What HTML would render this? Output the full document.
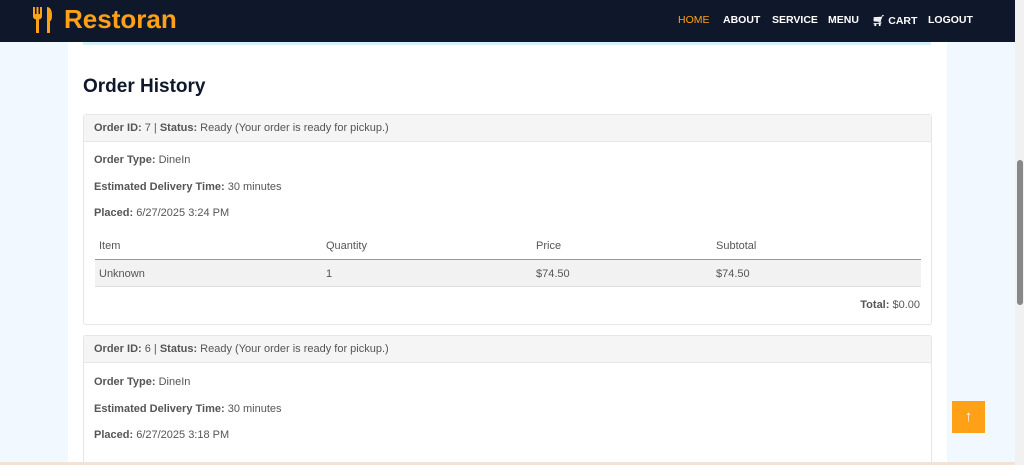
<!DOCTYPE html>
<html style="width:1024px;height:465px;overflow:hidden"><head><style>
*{box-sizing:border-box;margin:0;padding:0}
body{width:1024px;height:465px;overflow:hidden;background:#f1f8ff;font-family:"Liberation Sans",Arial,sans-serif;position:relative;color:#555;font-size:11px}
.nav{position:absolute;left:0;top:0;width:1015px;height:42px;background:#0f172b}
.logo{position:absolute;left:32px;top:4px;color:#fea116;font-weight:bold;font-size:26px;display:flex;align-items:center}
.menu{position:absolute;top:14px;left:678px;font-size:10.5px;font-weight:bold;color:#fff}
.menu span{position:absolute;white-space:nowrap}
.scroll{position:absolute;left:1015px;top:0;width:9px;height:465px;background:#f1f1f1}
.thumb{position:absolute;left:1017px;top:160px;width:6px;height:145px;background:#888;border-radius:3px}
.wrap{position:absolute;left:68px;top:42px;width:879px;height:423px;background:#fff}
.line{position:absolute;left:83px;top:42px;width:848px;height:3px;background:#d5f1fa}
h1{position:absolute;left:83px;top:76px;font-size:19px;color:#0f172b;font-weight:bold}
.card{position:absolute;left:83px;width:849px;border:1px solid #e6e6e6;border-radius:3px;background:#fff}
.hd{height:27px;background:#f5f5f5;border-bottom:1px solid #e6e6e6;padding:6px 10px;line-height:14px}
b{color:#555}
.p{position:absolute;left:10px}
.tbl{position:absolute;left:11px;width:826px}
.th{height:29px;border-bottom:1px solid #999;position:relative}
.tr{height:27px;background:#f2f2f2;border-bottom:1px solid #ddd;position:relative}
.c{position:absolute;top:8px}
.up{position:absolute;left:952px;top:401px;width:33px;height:32px;background:#fea116;color:#fff;text-align:center;line-height:32px;font-size:15px}
.bot{position:absolute;left:0;top:462px;width:1015px;height:3px;background:#f3e2d6}
</style></head><body>
<div class="nav">
<div class="logo"><svg width="22" height="26" viewBox="0 0 22 26"><path d="M1 0h2v7h1.5V0h2v7H8V0h2v9c0 2-1 3-3 3.5V26H4V12.5C2 12 1 11 1 9z" fill="#fea116"/><path d="M15 0c3 0 5 3 5 8s-1 6-2 6v12h-3z" fill="#fea116"/></svg><span style="margin-left:10px">Restoran</span></div>
<div class="menu"><span style="left:0;color:#fea116;font-weight:normal">HOME</span><span style="left:45px">ABOUT</span><span style="left:94px">SERVICE</span><span style="left:150px">MENU</span><span style="left:194px">🛒︎ CART</span><span style="left:250px">LOGOUT</span></div>
</div>
<div class="scroll"></div><div class="thumb"></div>
<div class="wrap"></div><div class="line"></div>
<h1>Order History</h1>
<div class="card" style="top:114px;height:211px">
<div class="hd"><b>Order ID:</b> 7 | <b>Status:</b> Ready (Your order is ready for pickup.)</div>
<div class="p" style="top:39px"><b>Order Type:</b> DineIn</div>
<div class="p" style="top:66px"><b>Estimated Delivery Time:</b> 30 minutes</div>
<div class="p" style="top:92px"><b>Placed:</b> 6/27/2025 3:24 PM</div>
<div class="tbl" style="top:116px">
<div class="th"><span class="c" style="left:4px;top:9px">Item</span><span class="c" style="left:231px;top:9px">Quantity</span><span class="c" style="left:441px;top:9px">Price</span><span class="c" style="left:621px;top:9px">Subtotal</span></div>
<div class="tr"><span class="c" style="left:4px">Unknown</span><span class="c" style="left:231px">1</span><span class="c" style="left:441px">$74.50</span><span class="c" style="left:621px">$74.50</span></div>
</div>
<div style="position:absolute;right:11px;top:184px"><b>Total:</b> $0.00</div>
</div>
<div class="card" style="top:335px;height:130px;border-bottom:none">
<div class="hd"><b>Order ID:</b> 6 | <b>Status:</b> Ready (Your order is ready for pickup.)</div>
<div class="p" style="top:40px"><b>Order Type:</b> DineIn</div>
<div class="p" style="top:67px"><b>Estimated Delivery Time:</b> 30 minutes</div>
<div class="p" style="top:93px"><b>Placed:</b> 6/27/2025 3:18 PM</div>
</div>
<div class="up">↑</div>
<div class="bot"></div>
</body></html>
